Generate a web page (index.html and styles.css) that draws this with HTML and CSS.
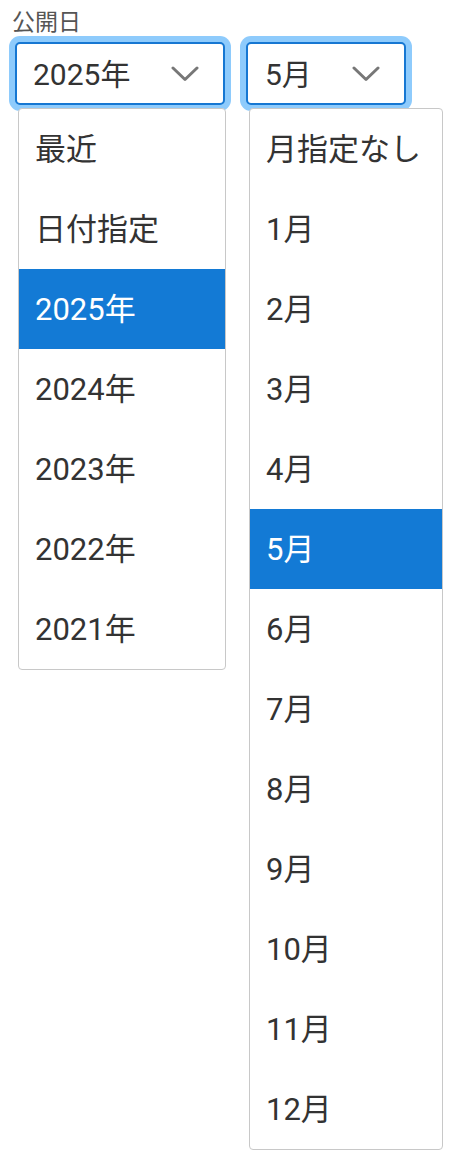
FILE: index.html
```html
<!DOCTYPE html>
<html lang="ja">
<head>
<meta charset="utf-8">
<link rel="stylesheet" href="styles.css">
</head>
<body>
<div class="field">
  <div class="label">公開日</div>
  <div class="row">
    <div class="select-wrap">
      <div class="select select-year">
        <span class="value">2025年</span>
        <svg class="chev" width="28" height="16" viewBox="0 0 28 16"><path d="M2 2 L14 13.5 L26 2" fill="none" stroke="#777" stroke-width="3" stroke-linecap="round" stroke-linejoin="round"/></svg>
      </div>
      <ul class="menu menu-year">
        <li>最近</li>
        <li>日付指定</li>
        <li class="active">2025年</li>
        <li>2024年</li>
        <li>2023年</li>
        <li>2022年</li>
        <li>2021年</li>
      </ul>
    </div>
    <div class="select-wrap">
      <div class="select select-month">
        <span class="value">5月</span>
        <svg class="chev" width="28" height="16" viewBox="0 0 28 16"><path d="M2 2 L14 13.5 L26 2" fill="none" stroke="#777" stroke-width="3" stroke-linecap="round" stroke-linejoin="round"/></svg>
      </div>
      <ul class="menu menu-month">
        <li>月指定なし</li>
        <li>1月</li>
        <li>2月</li>
        <li>3月</li>
        <li>4月</li>
        <li class="active">5月</li>
        <li>6月</li>
        <li>7月</li>
        <li>8月</li>
        <li>9月</li>
        <li>10月</li>
        <li>11月</li>
        <li>12月</li>
      </ul>
    </div>
  </div>
</div>
</body>
</html>
```
FILE: styles.css
```css
html, body {
  margin: 0;
  padding: 0;
  background: #fff;
}
body {
  min-height: 1164px;
  font-family: Roboto, "Noto Sans CJK JP", sans-serif;
  color: #333;
}
.field {
  padding: 9px 0 0 12px;
}
.label {
  font-size: 23px;
  line-height: 22px;
  color: #555;
  font-family: "Noto Sans CJK JP", sans-serif;
}
.row {
  display: flex;
  gap: 21px;
  margin-top: 11px;
  margin-left: 3px;
}
.select-wrap {
  position: relative;
}
.select {
  box-sizing: border-box;
  height: 63px;
  border: 2px solid #1677d2;
  border-radius: 5px;
  box-shadow: 0 0 0 6px #8ecbfc;
  background: #fff;
  display: flex;
  align-items: center;
  justify-content: space-between;
  padding: 0 24px 0 16px;
}
.select-year {
  width: 210px;
}
.select-month {
  width: 160px;
  padding-left: 17px;
}
.value {
  font-size: 30px;
  line-height: 1;
  color: #333;
  margin-top: 2px;
}
.chev {
  display: block;
  margin-top: 1px;
}
.menu {
  position: absolute;
  top: 66px;
  left: 3px;
  margin: 0;
  padding: 0;
  list-style: none;
  background: #fff;
  border: 1px solid #c8c8c8;
  border-radius: 4px;
  box-sizing: border-box;
  overflow: hidden;
  z-index: 2;
}
.menu-year {
  width: 208px;
}
.menu-month {
  width: 194px;
}
.menu li {
  height: 80px;
  line-height: 82px;
  padding-left: 16px;
  font-size: 31px;
  color: #333;
  white-space: nowrap;
}
.menu li.active {
  background: #137ad5;
  color: #fff;
}
```
